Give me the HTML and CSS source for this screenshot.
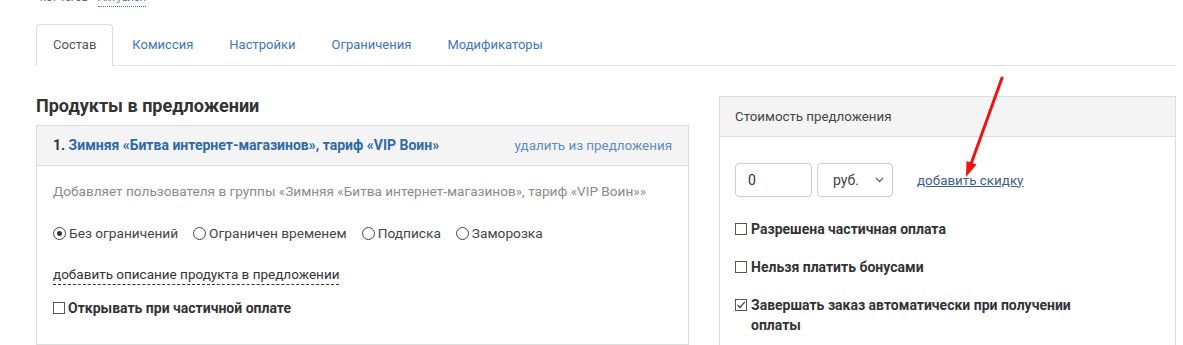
FILE: index.html
```html
<!DOCTYPE html>
<html lang="ru">
<head>
    <meta charset="UTF-8">
    <meta content="width=device-width, initial-scale=1.0" name="viewport">
    <title>Предложение — Состав</title>
    <link rel="stylesheet" href="styles.css">
</head>
<body>
<div class="page">
    <div class="meta">
        <span class="meta-tags">нет тегов</span>
        <span class="meta-status">Актуален</span>
    </div>

    <ul class="tabs">
        <li class="tab active">Состав</li>
        <li class="tab">Комиссия</li>
        <li class="tab">Настройки</li>
        <li class="tab">Ограничения</li>
        <li class="tab">Модификаторы</li>
    </ul>

    <div class="columns">
        <div class="products">
            <h2>Продукты в предложении</h2>
            <div class="panel">
                <div class="panel-head product-head">
                    <span><b class="num">1.</b> <a class="product-name">Зимняя «Битва интернет-магазинов», тариф «VIP Воин»</a></span>
                    <a class="remove">удалить из предложения</a>
                </div>
                <div class="panel-body product-body">
                    <p class="desc">Добавляет пользователя в группы «Зимняя «Битва интернет-магазинов», тариф «VIP Воин»»</p>
                    <div class="radios">
                        <label class="radio"><span class="dot on"></span>Без ограничений</label>
                        <label class="radio"><span class="dot"></span>Ограничен временем</label>
                        <label class="radio"><span class="dot"></span>Подписка</label>
                        <label class="radio"><span class="dot"></span>Заморозка</label>
                    </div>
                    <div><a class="dashed">добавить описание продукта в предложении</a></div>
                    <label class="check check-left"><span class="box"></span><span>Открывать при частичной оплате</span></label>
                </div>
            </div>
        </div>

        <div class="price">
            <div class="panel price-panel">
                <div class="panel-head">Стоимость предложения</div>
                <div class="panel-body price-body">
                    <div class="price-row">
                        <input class="amount" type="text" value="0">
                        <div class="currency">
                            <span>руб.</span>
                            <svg class="chevron" width="9" height="6" viewBox="0 0 9 6">
                                <path d="M1 1l3.5 3.5L8 1" fill="none" stroke="#666" stroke-width="1.3"/>
                            </svg>
                        </div>
                        <a class="discount">добавить скидку</a>
                    </div>
                    <div class="checks">
                        <label class="check"><span class="box"></span><span>Разрешена частичная оплата</span></label>
                        <label class="check"><span class="box"></span><span>Нельзя платить бонусами</span></label>
                        <label class="check"><span class="box">
                            <svg width="10" height="10" viewBox="0 0 10 10">
                                <path d="M1.5 5l2.5 2.5L8.8 1.8" fill="none" stroke="#444" stroke-width="1.2"/>
                            </svg>
                        </span><span class="wrap">Завершать заказ автоматически при получении оплаты</span></label>
                    </div>
                </div>
            </div>
        </div>
    </div>
</div>

<!-- annotation arrow drawn over the screenshot -->
<svg class="pointer" width="1183" height="345" viewBox="0 0 1183 345">
    <line x1="1002" y1="78" x2="971" y2="164" stroke="#f01212" stroke-width="3" stroke-linecap="round"/>
    <polygon points="966,177 976.5,164.5 966.5,161" fill="#f01212"/>
</svg>
</body>
</html>
```

FILE: styles.css
```css
body {
    margin: 0;
    font-family: Roboto, "Liberation Sans", sans-serif;
    font-size: 14px;
    color: #333;
    background: #fff;
    overflow: hidden;
}

a {
    cursor: pointer;
}

.page {
    width: 1140px;
    padding-left: 36px;
}

.meta {
    margin-top: -9px;
    height: 16px;
    line-height: 14px;
    font-size: 11px;
    padding-left: 4px;
    display: flex;
    gap: 10px;
}

.meta-tags {
    color: #555;
}

.meta-status {
    color: #3f72b5;
    border-bottom: 1px dotted #3f72b5;
}

.tabs {
    display: flex;
    list-style: none;
    margin: 17px 0 0;
    padding: 0;
    border-bottom: 1px solid #e2e2e2;
    font-size: 13px;
}

.tab {
    padding: 10px 16px;
    line-height: 20px;
    margin-right: 2px;
    margin-bottom: -1px;
    border: 1px solid transparent;
    border-radius: 4px 4px 0 0;
    color: #4276b5;
}

.tab.active {
    border-color: #ddd;
    border-bottom-color: #fff;
    background: #fff;
    color: #555;
}

.columns {
    display: grid;
    grid-template-columns: 653px 457px;
    gap: 30px;
    margin-top: 30px;
    align-items: start;
}

h2 {
    margin: 0 0 9px;
    font-size: 18px;
    line-height: 20px;
    font-weight: 700;
    color: #333;
}

.panel {
    border: 1px solid #ddd;
}

.panel-head {
    background: #f4f4f4;
    border-bottom: 1px solid #ddd;
    padding: 10px 15px;
    line-height: 19px;
    font-size: 13.3px;
    color: #444;
}

.product-head {
    display: flex;
    justify-content: space-between;
    padding: 10px 16px;
    font-size: 14px;
}

.num {
    color: #333;
}

.product-name {
    font-weight: 700;
    color: #2f69a6;
}

.remove {
    font-size: 13.4px;
    color: #5b8dc3;
}

.product-body {
    padding: 15px 16px 26px;
}

.desc {
    margin: 0 0 22px;
    line-height: 20px;
    font-size: 13.6px;
    color: #8a8a8a;
}

.radios {
    display: flex;
    line-height: 20px;
    margin-bottom: 22px;
    font-size: 13.7px;
    color: #444;
}

.radio {
    display: flex;
    align-items: center;
    margin-right: 15px;
}

.dot {
    width: 11px;
    height: 11px;
    border: 1px solid #444;
    border-radius: 50%;
    margin-right: 3px;
    display: flex;
    align-items: center;
    justify-content: center;
}

.dot.on::after {
    content: "";
    width: 5px;
    height: 5px;
    border-radius: 50%;
    background: #333;
}

.dashed {
    display: inline-block;
    line-height: 19px;
    font-size: 13.5px;
    border-bottom: 1px dashed #333;
    color: #333;
}

.check {
    display: flex;
    align-items: flex-start;
    gap: 4px;
    line-height: 20px;
    font-weight: 700;
    color: #333;
}

.check-left {
    margin-top: 13px;
    gap: 3px;
}

.box {
    flex: none;
    width: 10px;
    height: 10px;
    margin-top: 4px;
    border: 1px solid #555;
    background: #fff;
    display: flex;
    align-items: center;
    justify-content: center;
}

.price-body {
    padding: 26px 15px 40px;
}

.price-row {
    display: flex;
    align-items: center;
}

.amount {
    width: 77px;
    height: 34px;
    box-sizing: border-box;
    border: 1px solid #ccc;
    border-radius: 4px;
    padding: 0 12px;
    font-family: Roboto, "Liberation Sans", sans-serif;
    font-size: 14px;
    color: #333;
}

.currency {
    width: 76px;
    height: 34px;
    box-sizing: border-box;
    margin-left: 5px;
    border: 1px solid #ccc;
    border-radius: 4px;
    padding: 0 8px 0 15px;
    display: flex;
    align-items: center;
    justify-content: space-between;
    color: #444;
}

.discount {
    margin-left: 24px;
    font-size: 13.4px;
    color: #3c5f8c;
    text-decoration: underline;
}

.checks {
    margin-top: 22px;
    display: flex;
    flex-direction: column;
    gap: 18px;
}

.wrap {
    max-width: 340px;
}

.pointer {
    position: absolute;
    left: 0;
    top: 0;
    pointer-events: none;
}
```
